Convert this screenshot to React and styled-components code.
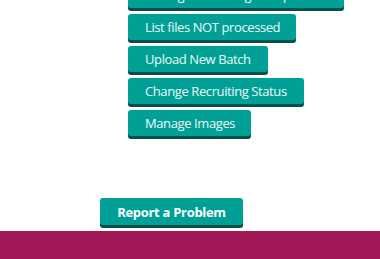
import React from 'react';
import styled, { createGlobalStyle } from 'styled-components';

const GlobalStyle = createGlobalStyle`
	html, body {
		margin:0;
		padding:0;
		background:#ffffff;
		overflow:hidden;
	}
	body {
		font-family:"Open Sans", "Noto Sans", sans-serif;
	}
`

const Page = styled.div`
	width:380px;
	height:259px;
	display:flex;
	flex-direction:column;
	overflow:hidden;
`

const Main = styled.main`
	flex:1;
	display:flex;
	flex-direction:column;
`

const ActionList = styled.ul`
	list-style:none;
	margin:-18px 0 0 0;
	padding:0 0 0 128px;
	display:flex;
	flex-direction:column;
	align-items:flex-start;
	gap:3px;
`

const ActionButton = styled.button`
	height:26px;
	margin:0 0 3px 0;
	padding:0 0 1px 17px;
	border:none;
	border-radius:3px;
	background-color:#00a096;
	box-shadow:0 3px 0 #00504b;
	color:#eefaf8;
	font-family:"Open Sans", "Noto Sans", sans-serif;
	font-size:13px;
	font-weight:400;
	letter-spacing:-0.4px;
	white-space:nowrap;
	cursor:pointer;
	width:${props => props.$w}px;
	text-align:left;
`

const ReportRow = styled.div`
	margin-top:auto;
	padding:0 0 6px 100px;
`

const ReportButton = styled(ActionButton)`
	width:143px;
	height:27px;
	margin:0;
	font-weight:700;
	color:#ffffff;
	text-align:center;
	padding:0;
	letter-spacing:-0.3px;
`

const Footer = styled.footer`
	height:28px;
	background-color:#a01856;
`

const actions = [
	{ label: 'Manage Recruiting Groups', w: 216 },
	{ label: 'List files NOT processed', w: 168 },
	{ label: 'Upload New Batch', w: 140 },
	{ label: 'Change Recruiting Status', w: 176 },
	{ label: 'Manage Images', w: 123 },
];

const App = () => {
	return (
		<Page>
			<GlobalStyle />
			<Main>
				<ActionList>
					{actions.map(a => (
						<li key={a.label}>
							<ActionButton $w={a.w}>{a.label}</ActionButton>
						</li>
					))}
				</ActionList>
				<ReportRow>
					<ReportButton>Report a Problem</ReportButton>
				</ReportRow>
			</Main>
			<Footer />
		</Page>
	);
};

export default App;
